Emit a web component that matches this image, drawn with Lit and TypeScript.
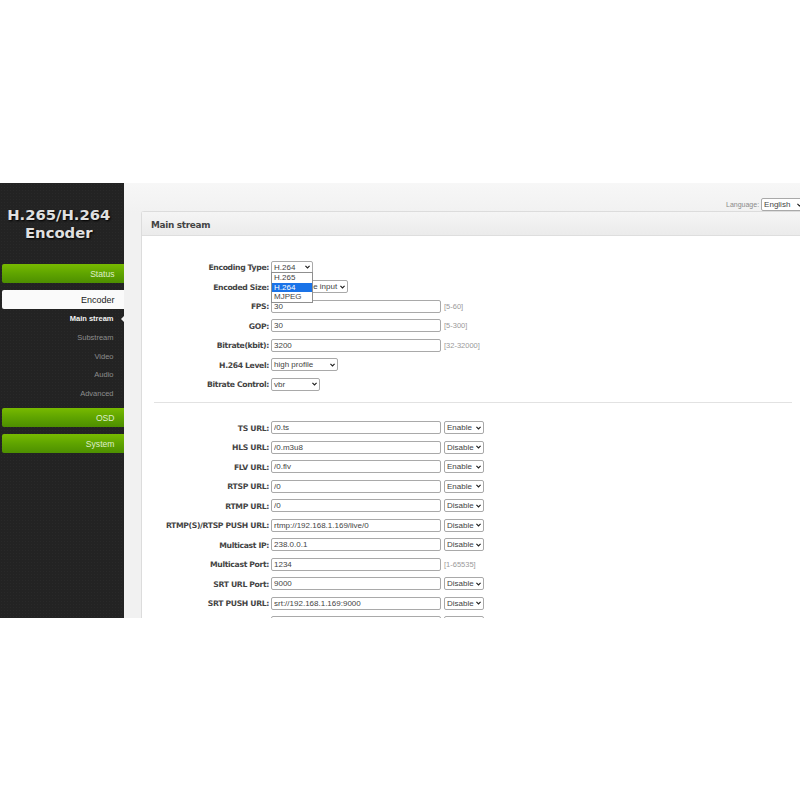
import { LitElement, html, css } from "lit";
import { customElement } from "lit/decorators.js";

type Row = { label: string; value?: string; sel?: string; selW?: number; hint?: string; opt?: string };

const top: Row[] = [
  { label: "Encoding Type:", sel: "H.264", selW: 42 },
  { label: "Encoded Size:", sel: "same as the input", selW: 77 },
  { label: "FPS:", value: "30", hint: "[5-60]" },
  { label: "GOP:", value: "30", hint: "[5-300]" },
  { label: "Bitrate(kbit):", value: "3200", hint: "[32-32000]" },
  { label: "H.264 Level:", sel: "high profile", selW: 67 },
  { label: "Bitrate Control:", sel: "vbr", selW: 49 },
];
const urls: Row[] = [
  { label: "TS URL:", value: "/0.ts", opt: "Enable" },
  { label: "HLS URL:", value: "/0.m3u8", opt: "Disable" },
  { label: "FLV URL:", value: "/0.flv", opt: "Enable" },
  { label: "RTSP URL:", value: "/0", opt: "Enable" },
  { label: "RTMP URL:", value: "/0", opt: "Disable" },
  { label: "RTMP(S)/RTSP PUSH URL:", value: "rtmp://192.168.1.169/live/0", opt: "Disable" },
  { label: "Multicast IP:", value: "238.0.0.1", opt: "Disable" },
  { label: "Multicast Port:", value: "1234", hint: "[1-65535]" },
  { label: "SRT URL Port:", value: "9000", opt: "Disable" },
  { label: "SRT PUSH URL:", value: "srt://192.168.1.169:9000", opt: "Disable" },
  { label: "", value: "", opt: "Disable" },
];

@customElement("app-root")
export class AppRoot extends LitElement {
  static styles = css`
    :host { display: block; padding: 183px 0 182px; background: #fff; font-family: "Liberation Sans", Arial, sans-serif; }
    .frame { display: flex; height: 435px; overflow: hidden; width: 800px; }
    .side {
      width: 123.5px; flex: none; box-sizing: border-box; padding-top: 23px;
      background-color: #232323;
      background-image: radial-gradient(#292929 0.6px, transparent 0.8px);
      background-size: 3px 3px;
    }
    .logo {
      height: 58px; box-sizing: border-box; padding-right: 6px; text-align: center; color: #e0e0e0;
      font: bold 14.8px/18px "DejaVu Sans", sans-serif; text-shadow: 1px 1px 2px #000;
    }
    .btn {
      height: 19px; margin-left: 2px; box-sizing: border-box; padding: 1px 9px 0 0; text-align: right;
      font-size: 8.6px; line-height: 19px; border-radius: 2px 0 0 2px; color: #dfeecb;
      background: linear-gradient(#78ba00, #5fa400 50%, #4d8f00);
      margin-bottom: 7px;
    }
    .btn.on { background: #fafafa; color: #222; margin-bottom: 0; font-size: 9px; }
    .sub { margin-bottom: 5.5px; }
    .sub div { height: 18.75px; padding: 1px 10px 0 0; box-sizing: border-box; line-height: 18px; text-align: right; font-size: 7.5px; color: #8d8d8d; position: relative; }
    .sub .cur { color: #f2f2f2; font-weight: bold; }
    .sub .cur::after {
      content: ""; position: absolute; right: 0; top: 6.5px;
      border: 3px solid transparent; border-right: 3px solid #f2f2f2; border-left: 0;
    }
    .main { flex: 1; min-width: 0; display: flex; flex-direction: column; background: linear-gradient(#f7f7f7, #f1f1f1 30px); padding-left: 17.5px; }
    .lang { height: 28px; flex: none; display: flex; align-items: flex-start; gap: 2px; padding: 15px 0 0 585px; box-sizing: border-box; width: 300px; font-size: 7px; line-height: 13px; color: #8a8a8a; white-space: nowrap; }
    .panel { flex: 1; width: 700px; background: #fff; border: 1px solid #dcdcdc; border-radius: 3px 0 0 0; border-right: 0; }
    .head {
      height: 24px; box-sizing: border-box; padding-left: 9px;
      background: linear-gradient(#f5f5f5, #ebebeb); border-bottom: 1px solid #dedede;
      font: bold 8.9px/26px "DejaVu Sans", sans-serif; color: #444; letter-spacing: -0.3px;
    }
    .form { padding-top: 21.5px; position: relative; }
    .row { display: flex; align-items: center; height: 19.5px; }
    .lab {
      width: 127px; flex: none; box-sizing: border-box; padding-top: 1px; text-align: right; margin-right: 2px; white-space: nowrap;
      font: bold 7.7px "DejaVu Sans", sans-serif; color: #444; letter-spacing: -0.35px;
    }
    input, .sel { box-sizing: border-box; height: 13px; margin: 0; font: 8px "Liberation Sans", Arial, sans-serif; color: #444; background: #fff; border: 1px solid #a9a9a9; border-radius: 2px; outline: none; }
    input { width: 170px; padding: 0 2px; }
    .sel { display: flex; align-items: center; justify-content: space-between; padding: 0 2px; overflow: hidden; white-space: nowrap; flex: none; line-height: 11px; }
    .sel svg { flex: none; width: 5px; height: 4px; }
    .opt { margin-left: 3px; }
    .hint { margin-left: 3px; font-size: 7.5px; color: #9a9a9a; }
    hr { margin: 8px 8px 0 12px; border: 0; height: 1px; background: #e2e2e2; width: 638px; }
    .gap { height: 15px; }
    .drop {
      position: absolute; left: 129px; top: 36px; width: 42px; box-sizing: border-box;
      border: 1px solid #8f8f8f; background: #fff; font-size: 8px; color: #444;
    }
    .drop div { height: 9.6px; line-height: 9.6px; padding-left: 2px; }
    .drop .act { background: #1a73e8; color: #fff; }
  `;

  private sel(v: string, w: number, cls = "") {
    return html`<div class="sel ${cls}" style="width:${w}px">
      <span>${v}</span>
      <svg viewBox="0 0 5 4"><path d="M0.4 0.9 L2.5 3 L4.6 0.9" fill="none" stroke="#222" stroke-width="1.2" /></svg>
    </div>`;
  }

  private row(r: Row) {
    return html`<div class="row">
      <span class="lab">${r.label}</span>
      ${r.sel ? this.sel(r.sel, r.selW ?? 40) : html`<input .value=${r.value ?? ""} />`}
      ${r.opt ? this.sel(r.opt, 40, "opt") : ""}
      ${r.hint ? html`<span class="hint">${r.hint}</span>` : ""}
    </div>`;
  }

  render() {
    return html`<div class="frame">
      <nav class="side">
        <div class="logo">H.265/H.264<br />Encoder</div>
        <div class="btn">Status</div>
        <div class="btn on">Encoder</div>
        <div class="sub">
          <div class="cur">Main stream</div>
          <div>Substream</div>
          <div>Video</div>
          <div>Audio</div>
          <div>Advanced</div>
        </div>
        <div class="btn">OSD</div>
        <div class="btn">System</div>
      </nav>
      <main class="main">
        <div class="lang"><span>Language:</span>${this.sel("English", 44)}</div>
        <section class="panel">
          <div class="head">Main stream</div>
          <div class="form">
            ${top.map((r) => this.row(r))}
            <hr />
            <div class="gap"></div>
            ${urls.map((r) => this.row(r))}
            <div class="drop"><div>H.265</div><div class="act">H.264</div><div>MJPEG</div></div>
          </div>
        </section>
      </main>
    </div>`;
  }
}
